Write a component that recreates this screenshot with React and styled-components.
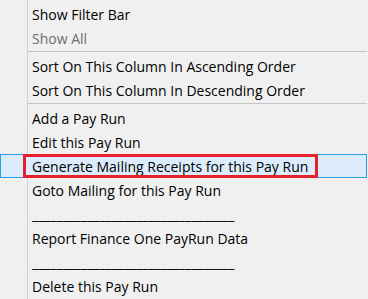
import React from "react";
import styled, { createGlobalStyle } from "styled-components";

const Global = createGlobalStyle`
  html, body { margin: 0; padding: 0; background: #f0f0f0; }
  body { width: 368px; height: 299px; overflow: hidden; }
`;

const Menu = styled.div`
  width: 367px;
  height: 299px;
  box-sizing: border-box;
  padding-top: 2px;
  display: flex;
  flex-direction: column;
  font-family: "Open Sans", "Noto Sans", sans-serif;
  font-size: 14px;
  background:
    linear-gradient(to right, transparent 27px, #d2d2d2 27px, #d2d2d2 28px, transparent 28px),
    #f0f0f0;
`;

const Item = styled.div`
  height: 24px;
  box-sizing: border-box;
  display: flex;
  align-items: stretch;
  padding-left: 31px;
  color: ${(p) => (p.$disabled ? "#6d6d6d" : "#000")};
  white-space: nowrap;
  border: 1px solid ${(p) => (p.$active ? "#2b9be2" : "transparent")};
  background: ${(p) => (p.$active ? "#dcecfc" : "transparent")};
`;

const Label = styled.span`
  position: relative;
  display: flex;
  align-items: center;
  &::after {
    content: "";
    display: ${(p) => (p.$marked ? "block" : "none")};
    position: absolute;
    left: -9px;
    right: -10px;
    top: -1px;
    bottom: -1px;
    border: 3px solid #e5202b;
    pointer-events: none;
  }
`;

const Separator = styled.div`
  height: 4px;
  display: flex;
  align-items: flex-start;
  padding-left: 28px;
  &::before {
    content: "";
    margin-top: 1px;
    height: 1px;
    flex: 1;
    background: #c6c6c6;
  }
`;

const items = [
  { t: "Show Filter Bar" },
  { t: "Show All", disabled: true },
  { sep: true },
  { t: "Sort On This Column In Ascending Order" },
  { t: "Sort On This Column In Descending Order" },
  { sep: true },
  { t: "Add a Pay Run" },
  { t: "Edit this Pay Run" },
  { t: "Generate Mailing Receipts for this Pay Run", active: true },
  { t: "Goto Mailing for this Pay Run" },
  { t: "_________________________________" },
  { t: "Report Finance One PayRun Data" },
  { t: "_________________________________" },
  { t: "Delete this Pay Run" },
];

export default function App() {
  return (
    <>
      <Global />
      <Menu>
        {items.map((it, i) =>
          it.sep ? (
            <Separator key={i} />
          ) : (
            <Item key={i} $disabled={it.disabled} $active={it.active}>
              <Label $marked={it.active}>{it.t}</Label>
            </Item>
          )
        )}
      </Menu>
    </>
  );
}
